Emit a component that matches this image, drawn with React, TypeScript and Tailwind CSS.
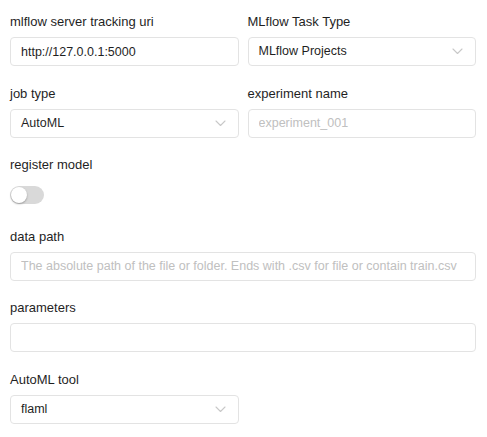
import React from 'react'

const font = { fontFamily: '"Liberation Sans", Arial, sans-serif' }

const Chevron = () => (
  <svg width="11" height="7" viewBox="0 0 11 7" fill="none" className="shrink-0">
    <polyline points="1,1 5.5,5.5 10,1" stroke="#c8c8c8" strokeWidth="1.1" strokeLinecap="round" strokeLinejoin="round" />
  </svg>
)

const Field: React.FC<{ label: string; className?: string; children: React.ReactNode }> = ({ label, className, children }) => (
  <div className={className}>
    <label className="block h-5 leading-5 text-[13px] text-[#1f1f1f] mb-[5px]">{label}</label>
    {children}
  </div>
)

const TextInput: React.FC<{ value?: string; placeholder?: string }> = ({ value, placeholder }) => (
  <input
    type="text"
    defaultValue={value}
    placeholder={placeholder}
    className="block w-full h-[29px] px-[10px] rounded-[4px] border border-[#e3e3e3] bg-white text-[12.5px] text-[#1f1f1f] placeholder-[#c0c0c0] outline-none"
    style={font}
  />
)

const Select: React.FC<{ value: string }> = ({ value }) => (
  <div className="flex items-center justify-between w-full h-[29px] pl-[10px] pr-[12px] rounded-[4px] border border-[#e3e3e3] bg-white text-[12.5px] text-[#1f1f1f]">
    <span>{value}</span>
    <Chevron />
  </div>
)

export default function App() {
  return (
    <div className="min-h-screen bg-white pl-[10px] pr-[11px] pt-[12px]" style={font}>
      <div className="grid grid-cols-2 gap-x-[9px] gap-y-[17.5px]">
        <Field label="mlflow server tracking uri">
          <TextInput value="http://127.0.0.1:5000" />
        </Field>
        <Field label="MLflow Task Type">
          <Select value="MLflow Projects" />
        </Field>

        <Field label="job type">
          <Select value="AutoML" />
        </Field>
        <Field label="experiment name">
          <TextInput placeholder="experiment_001" />
        </Field>

        <Field label="register model" className="col-span-2">
          <div className="h-[29px] flex items-center">
            <button
              type="button"
              className="relative w-[34px] h-[18px] rounded-full bg-[#d9d9d9]"
            >
              <span className="absolute left-[1px] top-[1px] w-4 h-4 rounded-full bg-white shadow-[0_1px_2px_rgba(0,0,0,0.3)]" />
            </button>
          </div>
        </Field>

        <Field label="data path" className="col-span-2">
          <TextInput placeholder="The absolute path of the file or folder. Ends with .csv for file or contain train.csv" />
        </Field>

        <Field label="parameters" className="col-span-2">
          <TextInput />
        </Field>

        <Field label="AutoML tool">
          <Select value="flaml" />
        </Field>
      </div>
    </div>
  )
}
